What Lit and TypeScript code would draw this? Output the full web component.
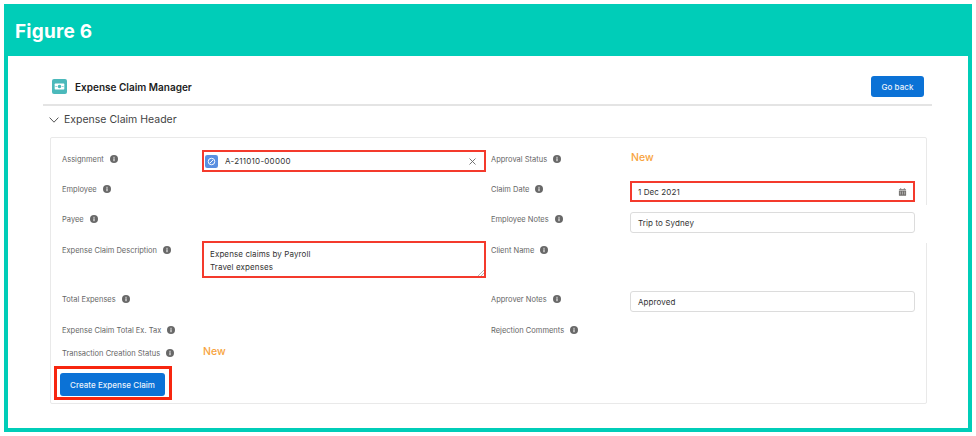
import { LitElement, html, css, svg } from 'lit';
import { customElement } from 'lit/decorators.js';

const infoIcon = html`<svg class="info" viewBox="0 0 8 8" aria-hidden="true">
  <circle cx="4" cy="4" r="4" fill="#686868"></circle>
  <rect x="3.4" y="3.3" width="1.2" height="2.9" fill="#e8e8e8"></rect>
  <rect x="3.4" y="1.8" width="1.2" height="1" fill="#e8e8e8"></rect>
</svg>`;

const calendarBars = svg`
  <path d="M1 3.2h8v5.3a.6.6 0 0 1-.6.6H1.6a.6.6 0 0 1-.6-.6z" fill="#706e6b"></path>
  <path d="M1.6 1.6h6.8a.6.6 0 0 1 .6.6v.4H1v-.4a.6.6 0 0 1 .6-.6z" fill="#706e6b"></path>
  <rect x="2.6" y=".7" width=".9" height="1.4" fill="#706e6b"></rect>
  <rect x="6.5" y=".7" width=".9" height="1.4" fill="#706e6b"></rect>
  <path d="M2 4.6h1.2v1H2zM4.4 4.6h1.2v1H4.4zM6.8 4.6H8v1H6.8zM2 6.6h1.2v1H2zM4.4 6.6h1.2v1H4.4zM6.8 6.6H8v1H6.8z" fill="#e6e6e6"></path>
`;

@customElement('app-root')
export class AppRoot extends LitElement {
  static styles = css`
    :host {
      display: block;
      height: 436px;
      padding: 4px 4px 4px;
      box-sizing: border-box;
      background: #fff;
      font-family: Inter, 'Liberation Sans', sans-serif;
      color: #2e2e2e;
    }
    .frame {
      height: 428px;
      box-sizing: border-box;
      border: 4px solid #00cdb8;
      border-top: 0;
      display: flex;
      flex-direction: column;
    }
    .banner {
      height: 52px;
      box-sizing: border-box;
      margin: 0 -4px;
      padding: 3px 0 0 11px;
      background: #00cdb8;
      color: #fff;
      font-size: 19px;
      font-weight: 700;
      letter-spacing: 0.2px;
      display: flex;
      align-items: center;
      flex: none;
    }
    .sheet {
      flex: 1;
      padding: 20px 36px 0 35px;
    }
    .head {
      height: 28px;
      padding: 0 8px 0 9px;
      border-bottom: 2px solid #e4e4e4;
      display: flex;
      align-items: flex-start;
    }
    .logo {
      width: 15px;
      height: 15px;
      margin-top: 3px;
      flex: none;
    }
    .title {
      margin: 4px 0 0 8px;
      font-size: 10px;
      line-height: 14px;
      font-weight: 600;
      color: #1c1c1c;
      flex: 1;
    }
    .btn {
      border: 0;
      border-radius: 3px;
      background: #0b72d6;
      color: #eaf3fc;
      font: 500 8px/1 Inter, 'Liberation Sans', sans-serif;
      letter-spacing: 0.05px;
      padding: 0;
    }
    .back {
      width: 53px;
      height: 21px;
    }
    .section {
      height: 27px;
      margin: 0 0 4px 6px;
      display: flex;
      align-items: center;
      gap: 5px;
      font-size: 10.5px;
      color: #444;
    }
    .section svg {
      width: 10px;
      height: 6px;
    }
    .card {
      position: relative;
      margin: 0 5px 0 7px;
      height: 267px;
      box-sizing: border-box;
      padding: 12px 0 0 11px;
      border: 1px solid #e9e9e9;
      border-radius: 2px;
    }
    .patch {
      position: absolute;
      right: -1px;
      top: 67px;
      width: 1px;
      height: 38px;
      background: #fff;
    }
    .grid {
      display: grid;
      grid-template-columns: 140px 284px 5px 139px 285px;
      grid-template-rows: 30px 30px 31px 49px 31px 23px 22px;
    }
    .label {
      grid-column: 1;
      display: flex;
      align-items: center;
      gap: 6px;
      height: 18px;
      font-size: 7.5px;
      color: #666;
      white-space: nowrap;
    }
    .label.right {
      grid-column: 4;
    }
    .info {
      width: 8px;
      height: 8px;
      flex: none;
    }
    .value {
      grid-column: 2;
    }
    .value.right {
      grid-column: 5;
    }
    .status {
      padding: 1px 0 0 1px;
      font-size: 10.5px;
      line-height: 14px;
      font-weight: 500;
      color: #f7a440;
    }
    .field {
      box-sizing: border-box;
      display: flex;
      align-items: center;
      padding: 0 6px;
      font-size: 8px;
      letter-spacing: 0.1px;
      color: #333;
      background: #fff;
      position: relative;
    }
    .plain {
      height: 21px;
      padding: 0 7px;
      border: 1px solid #dcdcdc;
      border-radius: 3px;
    }
    .flagged {
      border: 2px solid #f43a2c;
    }
    .lookup {
      height: 22px;
      padding: 0 3px 0 1px;
    }
    .date {
      margin-top: 1px;
      height: 21px;
      justify-content: space-between;
      padding-right: 6px;
    }
    .notes {
      margin-top: 2px;
    }
    .approver {
      margin-top: 1px;
    }
    .entity {
      width: 13px;
      height: 13px;
      flex: none;
    }
    .lookup span {
      margin-left: 7px;
      flex: 1;
      letter-spacing: 0.25px;
    }
    .clear {
      width: 7px;
      height: 7px;
      margin-right: 5px;
    }
    .cal {
      width: 9px;
      height: 10px;
    }
    .desc {
      height: 37px;
      display: block;
      padding: 5px 6px 0;
      line-height: 12.5px;
    }
    .grip {
      position: absolute;
      right: 0;
      bottom: 0;
      width: 6px;
      height: 6px;
    }
    .action {
      box-sizing: border-box;
      width: 118px;
      height: 34px;
      margin: 0 0 0 -8px;
      border: 3px solid #f7260f;
      padding: 4px 0 0 3px;
    }
    .create {
      display: block;
      width: 105px;
      height: 23px;
    }
  `;

  render() {
    return html`
      <div class="frame">
        <div class="banner">Figure 6</div>
        <div class="sheet">
          <div class="head">
            <svg class="logo" viewBox="0 0 15 15" aria-hidden="true">
              <rect width="15" height="15" rx="2" fill="#4bb9bb"></rect>
              <rect x="2.7" y="4.6" width="9.6" height="5.8" rx=".6" fill="#fff"></rect>
              <circle cx="7.5" cy="7.5" r="1.8" fill="#4bb9bb"></circle>
              <rect x="3.6" y="7" width="1" height="1" fill="#4bb9bb"></rect>
              <rect x="10.4" y="7" width="1" height="1" fill="#4bb9bb"></rect>
            </svg>
            <div class="title">Expense Claim Manager</div>
            <button class="btn back">Go back</button>
          </div>
          <div class="section">
            <svg viewBox="0 0 10 6" aria-hidden="true">
              <path d="M.6.6 5 5.2 9.4.6" fill="none" stroke="#555" stroke-width="1"></path>
            </svg>
            Expense Claim Header
          </div>
          <div class="card">
            <div class="patch"></div>
            <div class="grid">
              <div class="label">Assignment ${infoIcon}</div>
              <div class="value">
                <div class="field flagged lookup">
                  <svg class="entity" viewBox="0 0 12 12" aria-hidden="true">
                    <rect width="12" height="12" rx="2" fill="#5a8fe0"></rect>
                    <circle cx="6" cy="6" r="3" fill="none" stroke="#fff" stroke-width=".9"></circle>
                    <path d="M4.6 7.4 7.4 4.6" stroke="#fff" stroke-width=".9"></path>
                  </svg>
                  <span>A-211010-00000</span>
                  <svg class="clear" viewBox="0 0 7 7" aria-hidden="true">
                    <path d="M.5.5l6 6M6.5.5l-6 6" stroke="#666" stroke-width=".9"></path>
                  </svg>
                </div>
              </div>
              <div class="label right">Approval Status ${infoIcon}</div>
              <div class="value right"><div class="status">New</div></div>

              <div class="label">Employee ${infoIcon}</div>
              <div class="value"></div>
              <div class="label right">Claim Date ${infoIcon}</div>
              <div class="value right">
                <div class="field flagged date">
                  1 Dec 2021
                  <svg class="cal" viewBox="0 0 10 10" aria-hidden="true">${calendarBars}</svg>
                </div>
              </div>

              <div class="label">Payee ${infoIcon}</div>
              <div class="value"></div>
              <div class="label right">Employee Notes ${infoIcon}</div>
              <div class="value right"><div class="field plain notes">Trip to Sydney</div></div>

              <div class="label">Expense Claim Description ${infoIcon}</div>
              <div class="value">
                <div class="field flagged desc">
                  Expense claims by Payroll<br />Travel expenses
                  <svg class="grip" viewBox="0 0 6 6" aria-hidden="true">
                    <path d="M0 6 6 0M3 6l3-3" stroke="#888" stroke-width=".6"></path>
                  </svg>
                </div>
              </div>
              <div class="label right">Client Name ${infoIcon}</div>
              <div class="value right"></div>

              <div class="label">Total Expenses ${infoIcon}</div>
              <div class="value"></div>
              <div class="label right">Approver Notes ${infoIcon}</div>
              <div class="value right"><div class="field plain approver">Approved</div></div>

              <div class="label">Expense Claim Total Ex. Tax ${infoIcon}</div>
              <div class="value"></div>
              <div class="label right">Rejection Comments ${infoIcon}</div>
              <div class="value right"></div>

              <div class="label">Transaction Creation Status ${infoIcon}</div>
              <div class="value"><div class="status">New</div></div>
            </div>
            <div class="action">
              <button class="btn create">Create Expense Claim</button>
            </div>
          </div>
        </div>
      </div>
    `;
  }
}
